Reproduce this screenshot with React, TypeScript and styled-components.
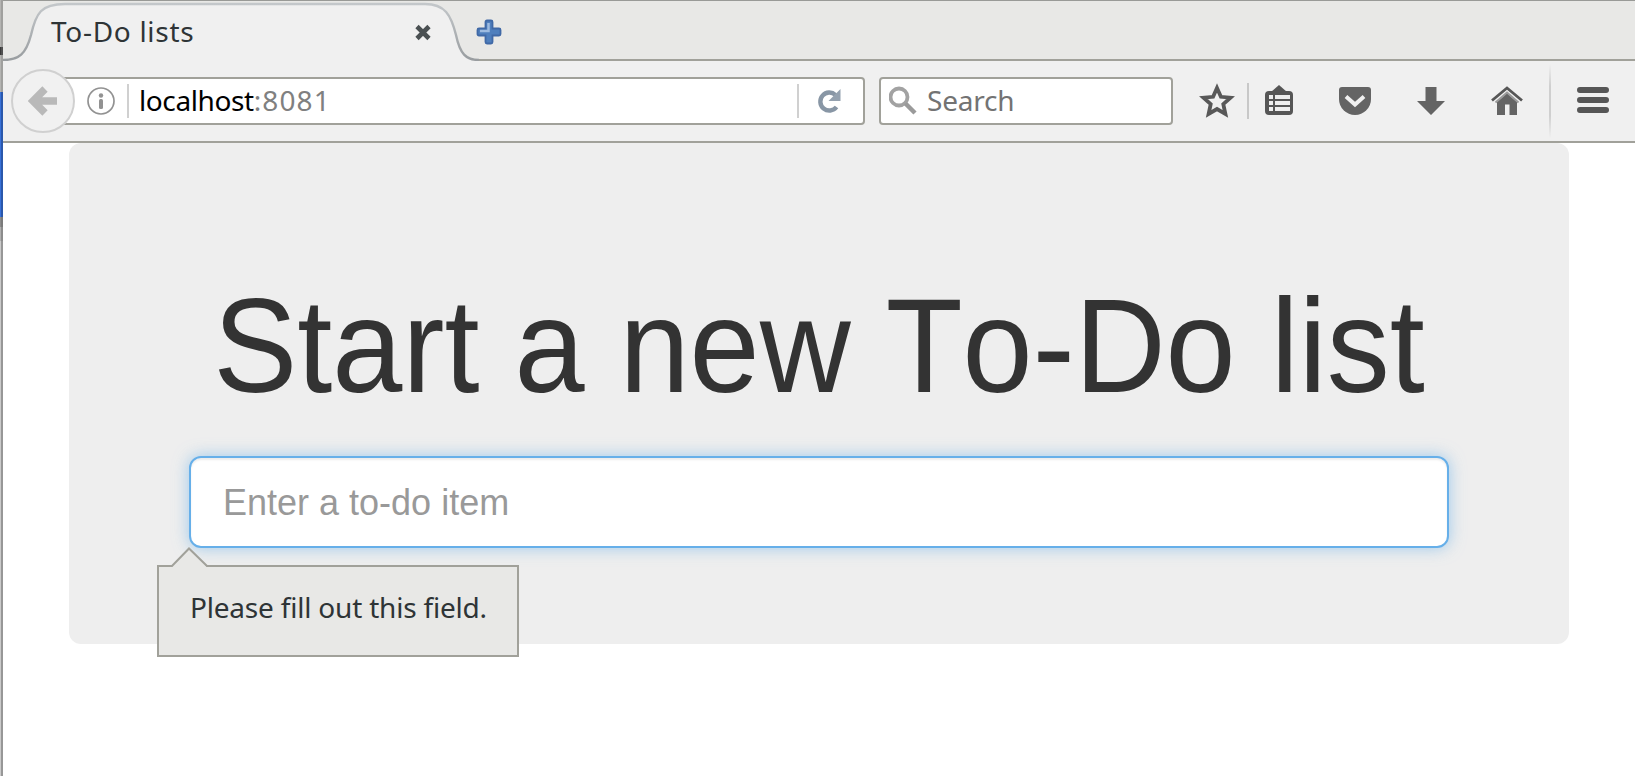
import React from "react";
import styled, { createGlobalStyle } from "styled-components";

const GlobalStyle = createGlobalStyle`
  * { box-sizing: border-box; }
  html, body { margin: 0; padding: 0; background: #fff; overflow: hidden; }
`;

const UI_FONT = `"Noto Sans", "Open Sans", sans-serif`;
const LINE = "#a1a19a";

const Desktop = styled.div`
  display: flex;
  width: 1635px;
  height: 776px;
  overflow: hidden;
`;

const Behind = styled.div`
  display: flex;
  flex-direction: column;
  flex: 0 0 3px;
`;

const Slice = styled.div<{ $h: number; $outer: string; $inner: string }>`
  flex: 0 0 ${(p) => p.$h}px;
  background: linear-gradient(90deg, ${(p) => p.$outer} 1px, ${(p) => p.$inner} 1px);
`;

const BrowserWindow = styled.div`
  display: flex;
  flex-direction: column;
  flex: 1;
  min-width: 0;
  border-top: 1px solid #999a97;
`;

const TabStrip = styled.div`
  display: flex;
  flex: 0 0 60px;
  background: linear-gradient(#e8e8e6 58px, ${LINE} 58px);
`;

const Tab = styled.div`
  position: relative;
  display: flex;
  align-items: center;
  flex: 0 0 476px;
  height: 60px;
  padding: 1px 47px 0 48px;
`;

const TabShape = styled.svg`
  position: absolute;
  left: 0;
  top: 0;
`;

const TabTitle = styled.span`
  position: relative;
  flex: 1;
  padding-bottom: 2px;
  font: 28px/40px ${UI_FONT};
  color: #2e3436;
  letter-spacing: 0.7px;
`;

const TabClose = styled.svg`
  position: relative;
  flex: none;
  margin-top: 2px;
`;

const NewTab = styled.svg`
  flex: none;
  margin: 18px 0 0 -3px;
`;

const Toolbar = styled.div`
  display: flex;
  align-items: center;
  flex: 0 0 82px;
  padding-left: 8px;
  background: #f0f0f0;
  border-bottom: 2px solid ${LINE};
`;

const BackButton = styled.div`
  position: relative;
  z-index: 1;
  display: flex;
  align-items: center;
  justify-content: center;
  flex: 0 0 64px;
  height: 64px;
  border: 2px solid #d0d0d0;
  border-radius: 50%;
  background: #f1f1f1;
`;

const Field = styled.div<{ $w: number }>`
  display: flex;
  align-items: center;
  flex: 0 0 ${(p) => p.$w}px;
  height: 48px;
  border: 2px solid ${LINE};
  border-radius: 4px;
  background: #fff;
  font: 28px/40px ${UI_FONT};
`;

const UrlField = styled(Field)`
  margin-left: -20px;
  padding-left: 29px;
`;

const SearchField = styled(Field)`
  margin-left: 14px;
  padding-left: 8px;
  color: #737373;
`;

const Divider = styled.span<{ $gap?: number }>`
  flex: 0 0 2px;
  height: 34px;
  margin-left: ${(p) => p.$gap ?? 0}px;
  background: #d0d0d0;
`;

const Url = styled.span`
  flex: 1;
  padding: 0 0 2px 10px;
  letter-spacing: -0.4px;
  color: #000;
`;

const Port = styled.span`
  letter-spacing: 1.1px;
  color: #808080;
`;

const SearchLabel = styled.span`
  padding: 0 0 2px 8px;
  letter-spacing: -0.2px;
`;

const Actions = styled.div`
  display: flex;
  align-items: center;
  flex: 1;
  height: 80px;
  padding-left: 26px;
`;

const Action = styled.svg<{ $gap?: number }>`
  flex: none;
  margin-left: ${(p) => p.$gap ?? 0}px;
`;

const ActionDivider = styled.span<{ $gap: number; $tall?: boolean }>`
  flex: 0 0 2px;
  height: ${(p) => (p.$tall ? 74 : 36)}px;
  margin-left: ${(p) => p.$gap}px;
  background: ${(p) =>
    p.$tall ? "linear-gradient(transparent, #cfcfcf 30%, #cfcfcf 70%, transparent)" : "#c8c8c8"};
`;

const Page = styled.main`
  flex: 1;
  padding: 0 66px;
  background: #fff;
`;

const Jumbotron = styled.section`
  height: 501px;
  padding: 136px 120px 0;
  border-radius: 12px;
  background: #eee;
`;

const Heading = styled.h1`
  margin: 0;
  height: 177px;
  font: 400 126px/139px "Liberation Sans", Arial, sans-serif;
  font-kerning: none;
  color: #333;
  text-align: center;
  white-space: nowrap;
`;

const HeadingText = styled.span`
  display: inline-block;
  transform: scaleY(1.055);
  transform-origin: 50% 83%;
`;

const Entry = styled.div`
  position: relative;
`;

const ItemInput = styled.input`
  display: block;
  width: 1260px;
  height: 92px;
  padding: 1px 32px 0;
  border: 2px solid #66afe9;
  border-radius: 12px;
  outline: 0;
  background: #fff;
  font: 36px "Liberation Sans", Arial, sans-serif;
  box-shadow: inset 0 2px 2px rgba(0, 0, 0, 0.075), 0 0 16px rgba(102, 175, 233, 0.6);
  &::placeholder {
    color: #999;
    opacity: 1;
  }
`;

const Tooltip = styled.div`
  position: absolute;
  left: -32px;
  top: 109px;
  width: 362px;
  height: 92px;
  padding: 20px 0 0 31px;
  border: 2px solid ${LINE};
  background: #e8e8e6;
  font: 28px/40px ${UI_FONT};
  letter-spacing: -0.2px;
  color: #2e3436;
  white-space: nowrap;
`;

const TooltipArrow = styled.svg`
  position: absolute;
  left: 11px;
  top: -20px;
`;

export default function App() {
  return (
    <Desktop>
      <GlobalStyle />
      <Behind>
        <Slice $h={47} $outer="#b4b4b2" $inner="#a0a09e" />
        <Slice $h={8} $outer="#3a3a3a" $inner="#505050" />
        <Slice $h={37} $outer="#b4b4b2" $inner="#a0a09e" />
        <Slice $h={125} $outer="#3871d8" $inner="#2a58ac" />
        <Slice $h={10} $outer="#8c8c8c" $inner="#7b7b7b" />
        <Slice $h={14} $outer="#b0b0b0" $inner="#8c8c8c" />
        <Slice $h={535} $outer="#cbcbcb" $inner="#979797" />
      </Behind>
      <BrowserWindow>
        <TabStrip>
          <Tab>
            <TabShape width="476" height="60" viewBox="0 0 476 60">
              <defs>
                <linearGradient id="edge" x1="0" y1="0" x2="0" y2="1">
                  <stop offset="0" stopColor="#c3c7ca" />
                  <stop offset="1" stopColor="#999da0" />
                </linearGradient>
              </defs>
              <path d="M0 60V59C16 59 23 53 28 34C33 12 38 3 62 3H422C442 3 448 14 453 34C457 53 463 59 476 59V60Z" fill="#f0f0f0" />
              <path d="M0 59C16 59 23 53 28 34C33 12 38 3 62 3H422C442 3 448 14 453 34C457 53 463 59 476 59" fill="none" stroke="url(#edge)" strokeWidth="2.4" />
            </TabShape>
            <TabTitle>To-Do lists</TabTitle>
            <TabClose width="17" height="17" viewBox="0 0 17 17">
              <path d="M2 2.500L14 14.500M14 2.500L2 14.500" stroke="#4a5052" strokeWidth="4.600" />
            </TabClose>
          </Tab>
          <NewTab width="26" height="26" viewBox="0 0 26 26">
            <path d="M11 1.500H15Q16.500 1.500 16.500 3V9.500H23Q24.500 9.500 24.500 11V15Q24.500 16.500 23 16.500H16.500V23Q16.500 24.500 15 24.500H11Q9.500 24.500 9.500 23V16.500H3Q1.500 16.500 1.500 15V11Q1.500 9.500 3 9.500H9.500V3Q9.500 1.500 11 1.500Z" fill="#4f7fbd" stroke="#4069a6" strokeWidth="1.800" />
            <path d="M12.500 4V12H4" fill="none" stroke="#9dbbe0" strokeWidth="2.500" />
          </NewTab>
        </TabStrip>
        <Toolbar>
          <BackButton>
            <svg width="30" height="32" viewBox="0 0 30 32">
              <path d="M17 4L5 16L17 28M6 16H29" fill="none" stroke="#b9b9b9" strokeWidth="7.500" />
            </svg>
          </BackButton>
          <UrlField $w={810}>
            <svg width="30" height="30" viewBox="0 0 30 30">
              <circle cx="15" cy="15" r="13" fill="none" stroke="#929292" strokeWidth="1.700" />
              <circle cx="15" cy="9.500" r="2.200" fill="#929292" />
              <rect x="13" y="13" width="4" height="10" rx="1.500" fill="#929292" />
            </svg>
            <Divider $gap={11} />
            <Url>localhost<Port>:8081</Port></Url>
            <Divider />
            <svg width="64" height="40" viewBox="0 0 64 40">
              <path d="M37.500 26A9 9 0 1 1 36.500 14" fill="none" stroke="#8896a5" strokeWidth="4.400" />
              <path d="M41.500 8V20H29.500Z" fill="#94a1af" />
            </svg>
          </UrlField>
          <SearchField $w={294}>
            <svg width="30" height="30" viewBox="0 0 30 30">
              <circle cx="10" cy="11" r="8.500" fill="none" stroke="#a2a2a2" strokeWidth="3.800" />
              <path d="M16.500 17.500L26 27" stroke="#9a9a9a" strokeWidth="4.500" />
            </svg>
            <SearchLabel>Search</SearchLabel>
          </SearchField>
          <Actions>
            <Action width="36" height="36" viewBox="0 0 36 36">
              <path d="M18 5L21.900 13.800L31.500 14.700L24.300 21.100L26.400 31L18 26L9.600 31L11.700 21.100L4.500 14.700L14.100 13.800Z" fill="#f0f0f0" stroke="#585858" strokeWidth="3.800" />
            </Action>
            <ActionDivider $gap={12} />
            <Action $gap={15} width="30" height="32" viewBox="0 0 30 32">
              <rect x="1" y="6" width="28" height="24" rx="4" fill="#565656" />
              <path d="M7 7L15 0L23 7Z" fill="#565656" />
              <path d="M5 10h4v4H5zM11 10h15v4H11zM5 16h4v4H5zM11 16h15v4H11zM5 22h4v4H5zM11 22h15v4H11z" fill="#eee" />
            </Action>
            <Action $gap={44} width="34" height="30" viewBox="0 0 34 30">
              <path d="M1 4Q1 1 4 1H30Q33 1 33 4V13A16 16 0 0 1 1 13Z" fill="#646464" />
              <path d="M8 10.500L17 18.500L26 10.500" fill="none" stroke="#f0f0f0" strokeWidth="4" />
            </Action>
            <Action $gap={44} width="30" height="30" viewBox="0 0 30 30">
              <path d="M9.500 1H20.500V15H29L15 29L1 15H9.500Z" fill="#646464" />
            </Action>
            <Action $gap={44} width="34" height="30" viewBox="0 0 34 30">
              <path d="M7 16L17 7L27 16V29H19.500V18.500H15V29H7Z" fill="#646464" />
              <path d="M5.500 16.500L17 6.500L28.500 16.500" fill="none" stroke="#9a9a9a" strokeWidth="2" />
              <path d="M2 14.500L17 2L32 14.500" fill="none" stroke="#565656" strokeWidth="2.800" />
            </Action>
            <ActionDivider $gap={25} $tall />
            <Action $gap={25} width="34" height="30" viewBox="0 0 34 30">
              <path d="M4 4H30M4 14H30M4 24H30" stroke="#565656" strokeWidth="6" strokeLinecap="round" />
            </Action>
          </Actions>
        </Toolbar>
        <Page>
          <Jumbotron>
            <Heading><HeadingText>Start a new To-Do list</HeadingText></Heading>
            <Entry>
              <ItemInput placeholder="Enter a to-do item" />
              <Tooltip>
                <TooltipArrow width="40" height="21" viewBox="0 0 40 21">
                  <path d="M1 21V20L19 2L37 20V21Z" fill="#e8e8e6" />
                  <path d="M0 19H2L19 1.500L37 19H39" fill="none" stroke={LINE} strokeWidth="2" />
                </TooltipArrow>
                Please fill out this field.
              </Tooltip>
            </Entry>
          </Jumbotron>
        </Page>
      </BrowserWindow>
    </Desktop>
  );
}
